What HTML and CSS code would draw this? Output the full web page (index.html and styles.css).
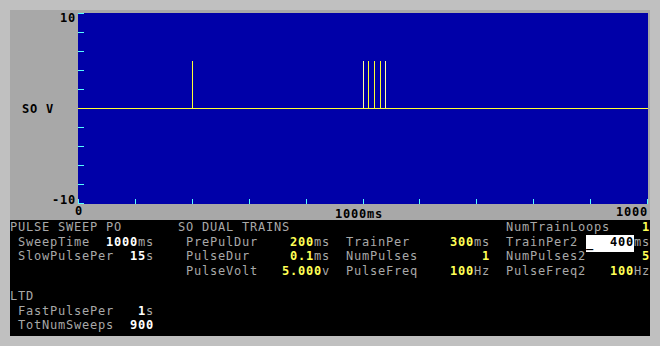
FILE: index.html
```html
<!DOCTYPE html>
<html lang="en">
<head>
  <meta charset="UTF-8" />
  <title>Pulse Sweep PO</title>
  <link rel="stylesheet" href="styles.css">
</head>
<body>
  <div class="screen">
    <div class="scope">
      <div class="yaxis">
        <div class="ymax">10</div>
        <div class="ylabel">SO V</div>
        <div class="ymin">-10</div>
      </div>

      <svg class="plot" width="570" height="191" viewBox="0 0 570 191" shape-rendering="crispEdges">
        <g fill="#55ffff">
          <rect x="0" y="0" width="6" height="1"/>
          <rect x="0" y="19" width="6" height="1"/>
          <rect x="0" y="38" width="6" height="1"/>
          <rect x="0" y="57" width="6" height="1"/>
          <rect x="0" y="76" width="6" height="1"/>
          <rect x="0" y="114" width="6" height="1"/>
          <rect x="0" y="133" width="6" height="1"/>
          <rect x="0" y="152" width="6" height="1"/>
          <rect x="0" y="171" width="6" height="1"/>
          <rect x="0" y="190" width="6" height="1"/>
          <rect x="0" y="186" width="1" height="5"/>
          <rect x="57" y="186" width="1" height="5"/>
          <rect x="114" y="186" width="1" height="5"/>
          <rect x="171" y="186" width="1" height="5"/>
          <rect x="228" y="186" width="1" height="5"/>
          <rect x="285" y="186" width="1" height="5"/>
          <rect x="341" y="186" width="1" height="5"/>
          <rect x="398" y="186" width="1" height="5"/>
          <rect x="455" y="186" width="1" height="5"/>
          <rect x="512" y="186" width="1" height="5"/>
          <rect x="569" y="186" width="1" height="5"/>
        </g>
        <!-- trace -->
        <g fill="#ffff33">
          <rect x="0" y="95" width="570" height="1"/>
          <rect x="114" y="48" width="1" height="47"/>
          <rect x="290" y="48" width="1" height="47"/>
          <rect x="296" y="48" width="1" height="47"/>
          <rect x="302" y="48" width="1" height="47"/>
        </g>
        <g fill="#ffffa0">
          <rect x="285" y="48" width="1" height="47"/>
          <rect x="307" y="48" width="1" height="47"/>
        </g>
      </svg>

      <div class="xaxis">
        <span class="xmin">0</span>
        <span class="xmid">1000ms</span>
        <span class="xmax">1000</span>
      </div>
    </div>

    <div class="panel">
      <div class="row">PULSE SWEEP PO       SO DUAL TRAINS                           NumTrainLoops    <b class="yel">1</b></div>
      <div class="row"> SweepTime  <b class="wht">1000</b>ms    PrePulDur    <b class="yel">200</b>ms  TrainPer     <b class="yel">300</b>ms  TrainPer2 <span class="cursor"><b class="caret">_</b>  <b>400</b></span>ms</div>
      <div class="row"> SlowPulsePer  <b class="wht">15</b>s    PulseDur     <b class="yel">0.1</b>ms  NumPulses        <b class="yel">1</b>  NumPulses2       <b class="yel">5</b></div>
      <div class="row">                      PulseVolt   <b class="yel">5.000</b>v  PulseFreq    <b class="yel">100</b>Hz  PulseFreq2   <b class="yel">100</b>Hz</div>

      <div class="row ltd">LTD</div>
      <div class="row"> FastPulsePer   <b class="wht">1</b>s</div>
      <div class="row"> TotNumSweeps  <b class="wht">900</b></div>
    </div>
  </div>
</body>
</html>
```

FILE: styles.css
```css
body {
  margin: 0;
  padding: 10px;
  background: #c0c0c0;
  font-family: "DejaVu Sans Mono", monospace;
  font-size: 12px;
  letter-spacing: 0.775px;
}

.screen {
  width: 640px;
  background: #a8a8a8;
}

.scope {
  display: grid;
  grid-template-columns: 68px 570px 2px;
  grid-template-rows: 3px 191px 16px;
}

.yaxis {
  grid-column: 1;
  grid-row: 1 / 3;
  padding: 2px 2px 0 0;
  text-align: right;
  font-weight: bold;
  line-height: 12px;
  color: #000;
}

.ylabel {
  margin-top: 79px;
  padding-left: 12px;
  text-align: left;
}

.ymin {
  margin-top: 79px;
}

.plot {
  grid-column: 2;
  grid-row: 2;
  display: block;
  background: #0000a8;
}

.xaxis {
  grid-column: 2 / 4;
  grid-row: 3;
  display: flex;
  align-items: flex-start;
  padding-top: 1px;
  font-weight: bold;
  line-height: 12px;
  color: #000;
}

.xmin {
  margin-left: -3px;
}

.xmid {
  margin-left: 252px;
  margin-top: 3px;
}

.xmax {
  margin-left: auto;
  margin-right: 2px;
  margin-top: 1px;
}

.panel {
  height: 116px;
  background: #000;
  color: #a8a8a8;
}

.row {
  height: 14.5px;
  line-height: 14.5px;
  white-space: pre;
}

.ltd {
  margin-top: 11px;
}

.yel {
  color: #ffff55;
}

.wht {
  color: #fff;
}

.cursor {
  background: #fff;
  color: #000;
  padding-bottom: 3px;
}

.caret {
  position: relative;
  top: 1px;
}
```
